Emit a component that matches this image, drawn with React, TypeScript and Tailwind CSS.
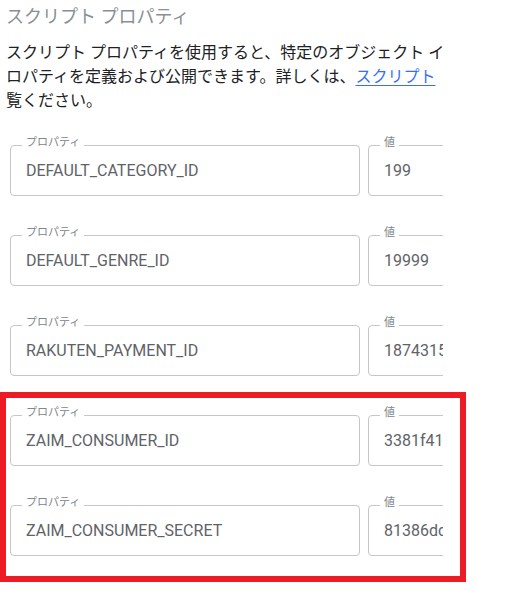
import React from 'react'

interface ScriptProperty {
  key: string
  value: string
}

const properties: ScriptProperty[] = [
  { key: 'DEFAULT_CATEGORY_ID', value: '199' },
  { key: 'DEFAULT_GENRE_ID', value: '19999' },
  { key: 'RAKUTEN_PAYMENT_ID', value: '1874315920384' },
  { key: 'ZAIM_CONSUMER_ID', value: '3381f41a9c2e7d05b' },
  { key: 'ZAIM_CONSUMER_SECRET', value: '81386dc4fe0b92a17' },
]

const font = { fontFamily: 'Roboto, "Noto Sans CJK JP", sans-serif' }

const Field = ({ label, value, className }: { label: string; value: string; className: string }) => (
  <div className={`relative h-[51px] shrink-0 rounded-[4px] border border-[#c6c6c6] flex items-center pl-[15px] ${className}`}>
    <span className="absolute top-[-10px] left-[11px] px-[4px] bg-white text-[11px] leading-[14px] text-[#80868b]">
      {label}
    </span>
    <span className="text-[16px] text-[#5f6368] whitespace-nowrap">{value}</span>
  </div>
)

export default function App() {
  return (
    <div className="relative w-[530px] h-[606px] bg-white overflow-hidden" style={font}>
      <div className="w-[443px] overflow-hidden">
        {/* Header */}
        <h2 className="ml-[6px] mt-[5px] text-[18px] leading-[24px] text-[#8a8f94] whitespace-nowrap">
          スクリプト プロパティ
        </h2>
        <div className="ml-[6px] mt-[12px] text-[16px] leading-[24px] text-[#202124] whitespace-nowrap">
          <div>スクリプト プロパティを使用すると、特定のオブジェクト イ</div>
          <div>
            ロパティを定義および公開できます。詳しくは、
            <a href="#" className="text-[#3a6ff0] underline underline-offset-[3px]">
              スクリプト
            </a>
          </div>
          <div>覧ください。</div>
        </div>

        {/* Property rows */}
        <div className="mt-[32px] pl-[10px] flex flex-col gap-[39px]">
          {properties.map(p => (
            <div key={p.key} className="flex gap-[8px]">
              <Field label="プロパティ" value={p.key} className="w-[350px]" />
              <Field label="値" value={p.value} className="w-[200px]" />
            </div>
          ))}
        </div>
      </div>

      {/* Highlight annotation */}
      <div className="absolute left-0 top-[392px] w-[466px] h-[190px] border-[6px] border-[#ed1c24]" />
    </div>
  )
}
